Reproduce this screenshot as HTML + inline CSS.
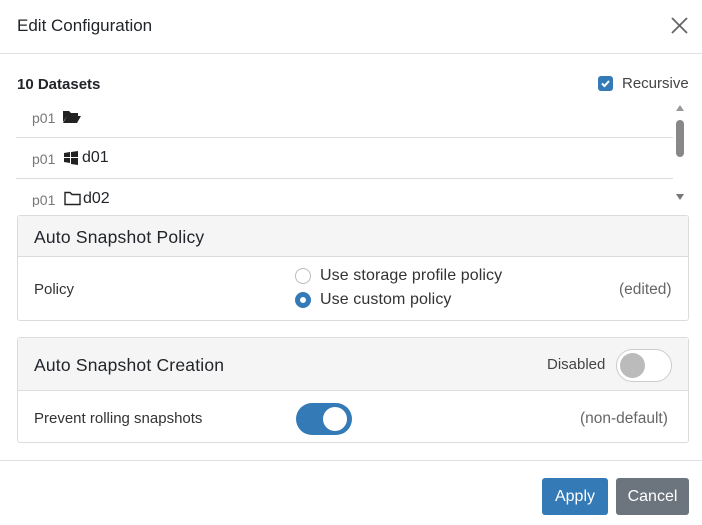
<!DOCTYPE html>
<html><head><style>
*{box-sizing:border-box;margin:0;padding:0}
body{width:702px;height:525px;background:#fff;font-family:"Liberation Sans",sans-serif;color:#212529;position:relative;overflow:hidden}
.a{position:absolute}
.hdr{left:0;top:0;width:702px;height:54px;border-bottom:1px solid #dee2e6}
.card{left:17px;width:672px;border:1px solid #dcdcdc;border-radius:3px;background:#fff}
.ch{background:#f5f5f5;border-bottom:1px solid #dcdcdc}
.row{left:16px;width:657px;border-bottom:1px solid #dcdcdc}
.g{color:#777;font-size:14px}
</style></head><body>
<div class="a hdr"></div>
<div class="a" style="left:17px;top:16px;font-size:17px">Edit Configuration</div>
<svg class="a" style="left:670px;top:16px" width="19" height="19"><path d="M2 2L17 17M17 2L2 17" stroke="#666" stroke-width="1.8"/></svg>
<div class="a" style="left:17px;top:76px;font-size:15px;font-weight:bold">10 Datasets</div>
<div class="a" style="left:598px;top:76px;width:15px;height:15px;background:#337ab7;border-radius:3px"><svg width="15" height="15"><path d="M4 7.5L6.5 10L11 5" stroke="#fff" stroke-width="2" fill="none"/></svg></div>
<div class="a" style="left:622px;top:75px;font-size:15px;color:#444">Recursive</div>
<div class="a row" style="top:97px;height:41px"></div>
<div class="a row" style="top:138px;height:41px"></div>
<div class="a g" style="left:32px;top:110px">p01</div>
<svg class="a" style="left:62px;top:110px" width="20" height="14"><path d="M1 1h6l2 2h7v3H5L1 12z M5 6h14l-4 7H1z" fill="#222"/></svg>
<div class="a g" style="left:32px;top:151px">p01</div>
<svg class="a" style="left:64px;top:151px" width="14" height="14"><path d="M0 2l6-1v5H0zM7 1l7-1v6H7zM0 7h6v5l-6-1zM7 7h7v7l-7-1z" fill="#222"/></svg>
<div class="a" style="left:82px;top:149px;font-size:16px">d01</div>
<div class="a" style="left:16px;top:186px;width:657px;height:21px;overflow:hidden">
<div class="a g" style="left:16px;top:6px">p01</div>
<svg class="a" style="left:48px;top:5px" width="17" height="15"><path d="M1 1.5h5l2 2h8v10H1z" fill="none" stroke="#222" stroke-width="1.4"/></svg>
<div class="a" style="left:67px;top:4px;font-size:16px">d02</div></div>
<svg class="a" style="left:675px;top:103px" width="10" height="100"><path d="M1 8L5 2L9 8z" fill="#999"/><rect x="1" y="17" width="8" height="37" rx="4" fill="#888"/><path d="M1 91L5 97L9 91z" fill="#777"/></svg>
<div class="a card" style="top:215px;height:106px"><div class="ch" style="height:41px"></div></div>
<div class="a" style="left:34px;top:227px;font-size:17.5px;letter-spacing:0.2px">Auto Snapshot Policy</div>
<div class="a" style="left:34px;top:281px;font-size:15px;color:#333">Policy</div>
<div class="a" style="left:295px;top:268px;width:16px;height:16px;border:1px solid #bbb;border-radius:50%"></div>
<div class="a" style="left:320px;top:267px;font-size:16px;letter-spacing:0.1px;color:#333">Use storage profile policy</div>
<div class="a" style="left:295px;top:292px;width:16px;height:16px;border:5px solid #337ab7;border-radius:50%"></div>
<div class="a" style="left:320px;top:291px;font-size:16px;letter-spacing:0.1px;color:#333">Use custom policy</div>
<div class="a" style="left:619px;top:281px;font-size:15.5px;color:#666">(edited)</div>
<div class="a card" style="top:337px;height:106px"><div class="ch" style="height:53px"></div></div>
<div class="a" style="left:34px;top:355px;font-size:17.5px;letter-spacing:0.2px">Auto Snapshot Creation</div>
<div class="a" style="left:547px;top:356px;font-size:15px;color:#444">Disabled</div>
<div class="a" style="left:616px;top:349px;width:56px;height:33px;border:1px solid #ccc;border-radius:17px;background:#fff"><div class="a" style="left:3px;top:3px;width:25px;height:25px;border-radius:50%;background:#bbb"></div></div>
<div class="a" style="left:34px;top:410px;font-size:15px;color:#333">Prevent rolling snapshots</div>
<div class="a" style="left:296px;top:403px;width:56px;height:32px;border-radius:16px;background:#337ab7"><div class="a" style="left:27px;top:4px;width:24px;height:24px;border-radius:50%;background:#fff"></div></div>
<div class="a" style="left:580px;top:410px;font-size:15.5px;color:#666">(non-default)</div>
<div class="a" style="left:0;top:460px;width:702px;border-top:1px solid #dee2e6"></div>
<div class="a" style="left:542px;top:478px;width:66px;height:37px;background:#337ab7;border-radius:3px;color:#fff;font-size:16px;text-align:center;line-height:37px">Apply</div>
<div class="a" style="left:616px;top:478px;width:73px;height:37px;background:#6c757d;border-radius:3px;color:#fff;font-size:16px;text-align:center;line-height:37px">Cancel</div>
</body></html>
